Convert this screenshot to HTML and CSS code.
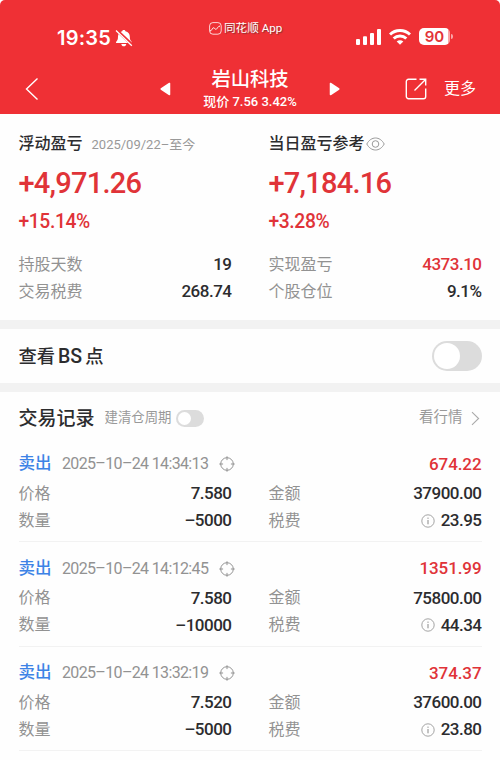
FILE: index.html
```html
<!DOCTYPE html>
<html lang="zh-CN">
<head>
<meta charset="utf-8">
<title>岩山科技</title>
<link rel="stylesheet" href="styles.css">
</head>
<body>
<svg width="0" height="0" class="defs">
  <symbol id="target" viewBox="0 0 16 16"><g fill="none" stroke="#929292"><circle cx="8" cy="8" r="6.300"/><path d="M8 .3v3.800M8 11.900v3.800M.3 8h3.800M11.900 8h3.800"/></g></symbol>
  <symbol id="info" viewBox="0 0 14 14"><circle cx="7" cy="7" r="6.200" fill="none" stroke="#999" stroke-width=".9"/><path d="M7 6v4.300M7 3.600v1.200" stroke="#888" stroke-width="1"/></symbol>
</svg>
<header class="header">
  <div class="status">
    <div class="clock"><span class="time">19:35</span>
      <svg width="18" height="18" viewBox="0 0 18 18"><path d="M8.800 1c.9 0 1.500.5 1.600 1.200C13.400 3 14.800 5 14.800 7.500c0 3 .6 3.900 1.800 5.200.5.600.2 1.300-.6 1.300H1.800c-.8 0-1.100-.7-.6-1.300 1.200-1.300 1.800-2.200 1.800-5.200 0-2.500 1.400-4.500 4.200-5.300C7.300 1.500 7.900 1 8.800 1zM6.300 15h5c-.3 1.500-1.100 2.300-2.500 2.300s-2.200-.8-2.500-2.300z" fill="#fff"/><path d="M1.500 1.200 17.500 16.200" stroke="#ef3035" stroke-width="3"/><path d="M1 1.500 16.800 16.800" stroke="#fff" stroke-width="1.300"/></svg>
    </div>
    <div class="source">
      <svg width="13" height="13" viewBox="0 0 13 13"><rect x=".6" y=".6" width="11.600" height="11.600" rx="3.300" fill="none" stroke="#fff" stroke-width=".8"/><path d="M1 9c2-.2 2-3 3.500-3.200S6 8 7.300 7.200 8.500 4.500 11 4" fill="none" stroke="#fff"/></svg>
      <span>同花顺 App</span>
    </div>
    <div class="signals">
      <svg width="25" height="16" viewBox="0 0 25 16" fill="#fff"><rect y="10" width="4" height="6" rx="1"/><rect x="7" y="7.300" width="4" height="8.700" rx="1"/><rect x="14" y="4" width="4" height="12" rx="1"/><rect x="21" y="0" width="4" height="16" rx="1"/></svg>
      <svg width="22" height="16" viewBox="0 0 22 16" fill="none" stroke="#fff" stroke-width="3"><path d="M1 5.500C6.500.2 15.500.2 21 5.500"/><path d="M4.700 9.500c3.500-3.300 9.100-3.300 12.600 0"/><path d="m11 15.800-3.300-3.300c1.800-1.600 4.800-1.600 6.600 0z" fill="#fff" stroke="none"/></svg>
      <div class="battery"><span class="cell">90</span><span class="tip"></span></div>
    </div>
  </div>
  <div class="nav">
    <svg class="back" width="14" height="24" viewBox="0 0 14 24"><path d="M12.500 1.500 1.500 12l11 10.500" fill="none" stroke="#fff" stroke-width="1.400"/></svg>
    <div class="stock">
      <svg width="11" height="14" viewBox="0 0 11 14"><path d="M9.500 1.500v11L1.200 7z" fill="#fff" stroke="#fff" stroke-width="1.500" stroke-linejoin="round"/></svg>
      <div class="name"><h1>岩山科技</h1><p>现价 <b>7.56 3.42%</b></p></div>
      <svg width="11" height="14" viewBox="0 0 11 14"><path d="M1.500 1.500v11L9.800 7z" fill="#fff" stroke="#fff" stroke-width="1.500" stroke-linejoin="round"/></svg>
    </div>
    <div class="actions">
      <svg width="22" height="22" viewBox="0 0 22 22" fill="none" stroke="#fff" stroke-width="1.400"><path d="M11.500 1.300H3.500a2.200 2.200 0 0 0-2.200 2.200v15a2.200 2.200 0 0 0 2.200 2.200h15a2.200 2.200 0 0 0 2.200-2.200v-8M9.500 12.500 20.500 1.500M14.500 1.300h6.200v6.200"/></svg>
      <span>更多</span>
    </div>
  </div>
</header>
<section class="summary">
  <div class="col">
    <div class="head"><h2>浮动盈亏</h2><span class="range">2025/09/22–至今</span></div>
    <div class="big">+4,971.26</div>
    <div class="pct">+15.14%</div>
    <div class="row"><span>持股天数</span><b>19</b></div>
    <div class="row"><span>交易税费</span><b>268.74</b></div>
  </div>
  <div class="col">
    <div class="head"><h2>当日盈亏参考</h2><svg class="eye" width="19" height="14" viewBox="0 0 19 14" fill="none" stroke="#999"><path d="M.8 7C5-1 14-1 18.200 7 14 15 5 15 .8 7z"/><circle cx="9.500" cy="7" r="3.300"/></svg></div>
    <div class="big">+7,184.16</div>
    <div class="pct">+3.28%</div>
    <div class="row"><span>实现盈亏</span><b class="up">4373.10</b></div>
    <div class="row"><span>个股仓位</span><b>9.1%</b></div>
  </div>
</section>
<section class="bs"><h2>查看<span>BS</span>点</h2><i class="switch"></i></section>
<section class="records">
  <div class="title"><h2>交易记录</h2><span class="cycle">建清仓周期</span><i class="switch small"></i><span class="quote">看行情</span><svg width="9" height="15" viewBox="0 0 9 15"><path d="m1 1.200 6.600 6.300L1 13.800" fill="none" stroke="#aaa" stroke-width="1.100"/></svg></div>
  <article class="trade">
    <div class="top"><strong>卖出</strong><time>2025–10–24 14:34:13</time><svg width="16" height="16"><use href="#target"/></svg><b class="up">674.22</b></div>
    <div class="grid">
      <div class="row"><span>价格</span><b>7.580</b></div><div class="row"><span>金额</span><b>37900.00</b></div>
      <div class="row"><span>数量</span><b>–5000</b></div><div class="row"><span>税费</span><svg width="14" height="14"><use href="#info"/></svg><b>23.95</b></div>
    </div>
  </article>
  <article class="trade">
    <div class="top"><strong>卖出</strong><time>2025–10–24 14:12:45</time><svg width="16" height="16"><use href="#target"/></svg><b class="up">1351.99</b></div>
    <div class="grid">
      <div class="row"><span>价格</span><b>7.580</b></div><div class="row"><span>金额</span><b>75800.00</b></div>
      <div class="row"><span>数量</span><b>–10000</b></div><div class="row"><span>税费</span><svg width="14" height="14"><use href="#info"/></svg><b>44.34</b></div>
    </div>
  </article>
  <article class="trade">
    <div class="top"><strong>卖出</strong><time>2025–10–24 13:32:19</time><svg width="16" height="16"><use href="#target"/></svg><b class="up">374.37</b></div>
    <div class="grid">
      <div class="row"><span>价格</span><b>7.520</b></div><div class="row"><span>金额</span><b>37600.00</b></div>
      <div class="row"><span>数量</span><b>–5000</b></div><div class="row"><span>税费</span><svg width="14" height="14"><use href="#info"/></svg><b>23.80</b></div>
    </div>
  </article>
</section>
</body>
</html>
```
FILE: styles.css
```css
* { box-sizing: border-box; margin: 0; padding: 0; }
body { width: 500px; height: 760px; overflow: hidden; background: #fefefe; color: #2c2c2e; font-family: Roboto, "Noto Sans CJK SC", sans-serif; font-size: 16px; line-height: 1; }
svg { display: block; flex: none; }
.defs { position: absolute; }
span, b, strong, time, h1, h2, p { white-space: nowrap; }
h1, h2, b { font-weight: 500; }

.header { height: 114px; background: #ef3035; color: #fff; border-radius: 5px 5px 0 0; }
.status { height: 64px; padding: 0 47px 0 57px; display: grid; grid-template-columns: 152px 1fr auto; }
.clock { display: flex; align-items: center; gap: 4px; padding-top: 11px; }
.time { font: 600 20px/24px Inter, sans-serif; letter-spacing: .2px; }
.source { display: flex; align-items: center; gap: 2px; height: 57px; font-size: 11.6px; text-shadow: 1px 1px 1px #8a3030; }
.signals { display: flex; align-items: center; gap: 8px; padding-top: 9px; }
.battery { display: flex; align-items: center; gap: 1px; }
.cell { width: 31px; height: 17px; border-radius: 5px; text-align: center; color: #e33338; background: linear-gradient(90deg, #fff 92%, #f9a5a7 92%); font: 600 15px/17px Inter, sans-serif; }
.tip { width: 2px; height: 5px; border-radius: 0 2px 2px 0; background: #f9a5a7; }
.nav { height: 50px; padding: 0 24px 0 25px; display: grid; grid-template-columns: 135px 180px 1fr; align-items: center; }
.stock { display: flex; align-items: center; justify-content: space-between; }
.name { text-align: center; }
.name h1 { font-size: 19.3px; line-height: 26px; }
.name p { font-size: 13px; line-height: 17px; font-weight: 500; margin-bottom: 2px; }
.actions { display: flex; align-items: center; justify-content: flex-end; gap: 17px; }

.summary { height: 206px; padding: 17px 18.5px 0; display: grid; grid-template-columns: 213px 213px; gap: 37px; }
.head { display: flex; align-items: center; height: 26px; }
.head h2 { font-size: 16px; }
.range { margin-left: 9px; font-size: 13px; color: #999; }
.eye { margin-left: 1px; }
.big { margin-top: 9px; height: 34px; line-height: 34px; font-size: 29px; font-weight: 500; letter-spacing: -.75px; color: #e03338; }
.pct { margin-top: 11px; height: 22px; line-height: 22px; font-size: 19.3px; font-weight: 500; letter-spacing: -.4px; color: #e03338; margin-bottom: 18px; }
.row { display: flex; align-items: center; height: 27px; }
.row span { color: #929292; flex: 1; }
.row b { font-size: 17px; letter-spacing: -.5px; }
.row svg { margin-right: 6px; }
b.up { color: #e03338; }

.bs { height: 72px; padding: 0 18px 0 18.5px; border: solid #f2f2f2; border-width: 9px 0; display: flex; align-items: center; justify-content: space-between; }
.bs h2 { font-size: 18.3px; padding-top: 1px; }
.bs span { margin: 0 3px; font-size: 19.5px; }
.switch { display: block; width: 50px; height: 30px; border-radius: 15px; background: #dcdcdc; padding: 2px; }
.switch::before { content: ""; display: block; width: 26px; height: 26px; border-radius: 50%; background: #fff; }
.switch.small { width: 28px; height: 17px; margin-left: 5px; }
.switch.small::before { width: 13px; height: 13px; }
.records { padding: 0 18.5px; }
.title { display: flex; align-items: center; height: 52px; color: #999; }
.title h2 { font-size: 19px; color: #2c2c2e; }
.cycle { margin-left: 10px; font-size: 13.4px; }
.quote { margin: 0 8px 0 auto; font-size: 14.5px; }
.title svg { margin-right: 2px; }
.trade { height: 104.5px; padding-top: 4px; border-bottom: 1px solid #f2f2f2; }
.trade + .trade { padding-top: 10.5px; }
.trade:first-of-type { height: 98px; }
.top { display: flex; align-items: center; height: 32px; }
.top strong { font-size: 16.5px; font-weight: 500; color: #3d83e6; padding-top: 1px; }
.top time { margin-left: 10.5px; width: 157px; color: #929292; font-size: 16px; letter-spacing: -.65px; }
.top b { margin-left: auto; font-size: 17px; letter-spacing: -.1px; }
.grid { display: grid; grid-template-columns: 213px 213px; column-gap: 37px; }
```
